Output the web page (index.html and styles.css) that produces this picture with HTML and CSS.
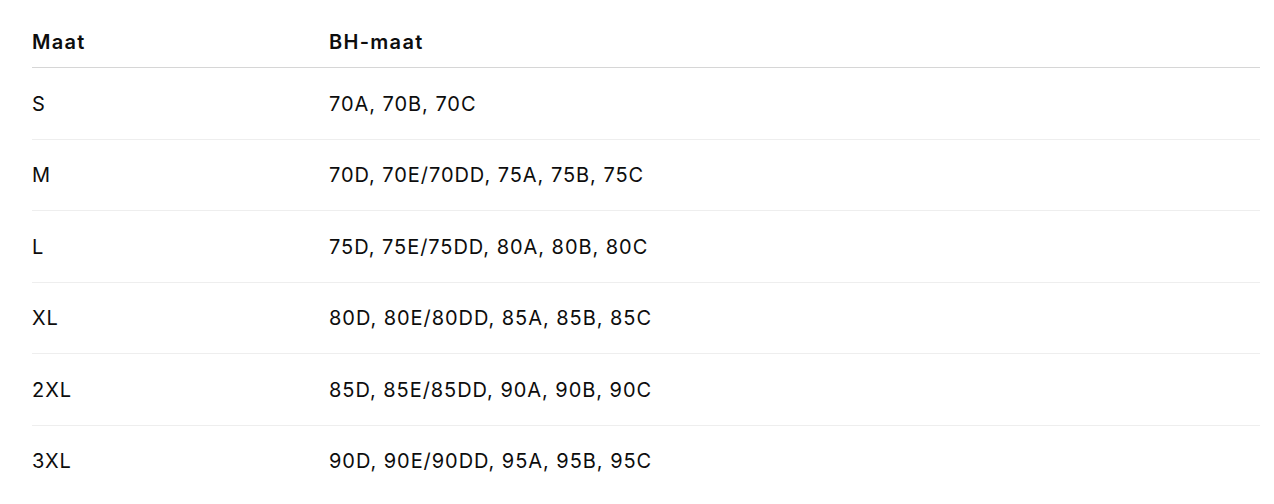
FILE: index.html
```html
<!DOCTYPE html>
<html lang="nl">
<head>
<meta charset="utf-8">
<title>Maattabel</title>
<link rel="stylesheet" href="styles.css">
</head>
<body>
<table class="size-table">
  <thead>
    <tr><th class="col-size">Maat</th><th>BH-maat</th></tr>
  </thead>
  <tbody>
    <tr><td>S</td><td>70A, 70B, 70C</td></tr>
    <tr><td>M</td><td>70D, 70E/70DD, 75A, 75B, 75C</td></tr>
    <tr><td>L</td><td>75D, 75E/75DD, 80A, 80B, 80C</td></tr>
    <tr><td>XL</td><td>80D, 80E/80DD, 85A, 85B, 85C</td></tr>
    <tr><td>2XL</td><td>85D, 85E/85DD, 90A, 90B, 90C</td></tr>
    <tr><td>3XL</td><td>90D, 90E/90DD, 95A, 95B, 95C</td></tr>
  </tbody>
</table>
</body>
</html>
```
FILE: styles.css
```css
html, body {
  margin: 0;
  padding: 0;
  background: #fff;
}
body {
  padding: 28px 14px 0 32px;
  font-family: Inter, "Liberation Sans", sans-serif;
  font-size: 20px;
  letter-spacing: 0.95px;
  color: #0d0d0d;
}
.size-table {
  width: 1228px;
  border-collapse: collapse;
}
.size-table th,
.size-table td {
  text-align: left;
  padding: 0;
  line-height: 28px;
}
.size-table th {
  font-weight: 600;
  letter-spacing: 1.3px;
  padding-bottom: 11px;
  border-bottom: 1px solid #d6d6d6;
}
.col-size {
  width: 297px;
}
.size-table td {
  padding-top: 21.5px;
  padding-bottom: 21px;
  font-weight: 400;
}
.size-table tbody tr + tr td {
  border-top: 1px solid #eeeeee;
}
```
